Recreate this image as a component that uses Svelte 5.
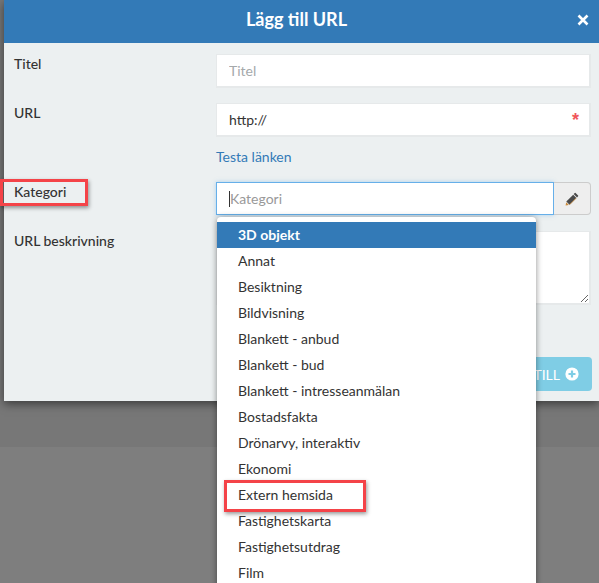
<script lang="ts">
	const categories = [
		'3D objekt',
		'Annat',
		'Besiktning',
		'Bildvisning',
		'Blankett - anbud',
		'Blankett - bud',
		'Blankett - intresseanmälan',
		'Bostadsfakta',
		'Drönarvy, interaktiv',
		'Ekonomi',
		'Extern hemsida',
		'Fastighetskarta',
		'Fastighetsutdrag',
		'Film'
	];
</script>

<div class="page">
	<div class="modal">
		<header class="head">
			<h1>Lägg till URL</h1>
			<svg class="close" viewBox="0 0 12 12" width="12" height="12" aria-hidden="true">
				<path d="M1.5 1.5l9 9M10.5 1.5l-9 9" stroke="#fff" stroke-width="2.6" fill="none" />
			</svg>
		</header>

		<div class="form">
			<div class="row">
				<span class="label">Titel</span>
				<div class="field"><input class="input" placeholder="Titel" /></div>
			</div>

			<div class="row row--url">
				<span class="label">URL</span>
				<div class="field required">
					<input class="input" value="http://" />
					<span class="star">*</span>
				</div>
			</div>

			<a class="test" href="#top">Testa länken</a>

			<div class="row">
				<span class="label mark-host">
					Kategori
					<span class="mark mark--label"></span>
				</span>
				<div class="field group">
					<div class="fake-input">
						<span class="caret"></span>
						<span class="ph">Kategori</span>
					</div>
					<button class="edit" aria-label="Redigera">
						<svg viewBox="0 0 14 14" width="14" height="14" aria-hidden="true">
							<path d="M10.6 1l2.5 2.5a.6.6 0 0 1 0 .8l-1.1 1.1-3.3-3.3 1.1-1.1a.6.6 0 0 1 .8 0z" fill="#4a4a4a" />
							<path d="M8.2 2.7l3.2 3.2-6.8 6.8-3.3-3.3z" fill="#4a4a4a" />
							<path d="M1.2 10.3l2.6 2.6-3.2.6z" fill="#c98a3c" />
							<path d="M4.6 12.7l6.6-6.6" stroke="#c98a3c" stroke-width="0.8" fill="none" />
						</svg>
					</button>
				</div>
			</div>

			<div class="row">
				<span class="label">URL beskrivning</span>
				<div class="field"><textarea class="area"></textarea></div>
			</div>

			<div class="actions">
				<button class="add">
					LÄGG TILL
					<svg viewBox="0 0 14 14" width="14" height="14" aria-hidden="true">
						<circle cx="7" cy="7" r="6.6" fill="#fff" />
						<path d="M7 3.5v7M3.5 7h7" stroke="#7fcde5" stroke-width="2.2" />
					</svg>
				</button>
			</div>
		</div>
	</div>

	<ul class="menu">
		{#each categories as name, i}
			<li class:active={i === 0}>
				{#if name === 'Extern hemsida'}
					<span class="mark mark--item"></span>
				{/if}
				{name}
			</li>
		{/each}
	</ul>
</div>

<style>
	:global(body) {
		margin: 0;
		background: #7e7e7e;
	}

	.page {
		position: relative;
		width: 599px;
		height: 583px;
		overflow: hidden;
		font: 14px Lato, 'Liberation Sans', sans-serif;
		color: #333;
		background: linear-gradient(#777 0, #777 447px, #7e7e7e 447px);
	}

	.modal {
		margin-left: 4px;
		height: 401px;
		background: #ecf0f1;
		box-shadow: 0 3px 9px rgba(0, 0, 0, 0.5);
	}

	.head {
		box-sizing: border-box;
		height: 43px;
		padding: 0 10px 5px 0;
		background: #337ab7;
		display: flex;
		align-items: center;
		justify-content: center;
		position: relative;
	}

	.head h1 {
		margin: 0;
		font: 700 18px Lato, sans-serif;
		color: #fff;
	}

	.close {
		position: absolute;
		right: 10px;
		top: 14px;
	}

	.form {
		padding: 11px 8px 0 10px;
		display: flex;
		flex-direction: column;
	}

	.row {
		display: grid;
		grid-template-columns: 202px 1fr;
		margin-bottom: 16px;
	}

	.row--url {
		margin-bottom: 12px;
	}

	.label {
		padding-top: 1px;
		font-weight: 500;
		line-height: 17px;
		color: #333;
	}

	.field {
		position: relative;
		display: flex;
	}

	.input,
	.area {
		box-sizing: border-box;
		width: 100%;
		border: 2px solid #e6e9ea;
		border-width: 1px 2px 2px 1px;
		background: #fff;
		padding: 0 12px;
		font: 14px Lato, sans-serif;
		color: #333;
		outline: none;
	}

	.input {
		height: 34px;
		margin-bottom: -1px;
	}

	.input::placeholder {
		color: #a5a9ab;
	}

	.area {
		height: 74px;
		resize: vertical;
	}

	.star {
		position: absolute;
		right: 12px;
		top: 7px;
		color: #f0565a;
		font: 700 18px 'Liberation Sans', sans-serif;
	}

	.test {
		margin: 0 0 17px 202px;
		color: #337ab7;
		text-decoration: none;
		line-height: 17px;
	}

	.group {
		height: 33px;
	}

	.fake-input {
		flex: 1;
		box-sizing: border-box;
		border: 1px solid #66afe9;
		box-shadow: 0 0 4px rgba(102, 175, 233, 0.5);
		background: #fff;
		display: flex;
		align-items: center;
		padding-left: 12px;
		color: #999;
	}

	.caret {
		width: 1px;
		height: 16px;
		background: #333;
	}

	.edit {
		width: 37px;
		box-sizing: border-box;
		border: 1px solid #ccc;
		border-left: 0;
		border-radius: 0 4px 4px 0;
		background: #eee;
		padding: 0;
		display: flex;
		align-items: center;
		justify-content: center;
	}

	.actions {
		display: flex;
		justify-content: flex-end;
		margin: 36px -1px 0 0;
	}

	.add {
		height: 34px;
		padding: 0 13px;
		border: 0;
		border-radius: 4px;
		background: #7fcde5;
		color: #fff;
		font: 14px Lato, sans-serif;
		display: flex;
		align-items: center;
		gap: 5px;
	}

	.menu {
		position: absolute;
		left: 217px;
		top: 217px;
		width: 319px;
		margin: 0;
		padding: 5px 0;
		list-style: none;
		background: #fff;
		border-radius: 4px 4px 0 0;
		box-shadow: 0 1px 6px rgba(0, 0, 0, 0.45);
	}

	.menu li {
		position: relative;
		height: 26px;
		line-height: 26px;
		padding-left: 21px;
		white-space: nowrap;
	}

	.menu li.active {
		background: #337ab7;
		color: #fff;
		font-weight: 700;
	}

	.mark-host {
		position: relative;
	}

	.mark {
		position: absolute;
		box-sizing: border-box;
		border: 3px solid #f44348;
		box-shadow: 1px 2px 4px rgba(0, 0, 0, 0.4);
	}

	.mark--label {
		left: -14px;
		top: -3px;
		width: 88px;
		height: 27px;
	}

	.mark--item {
		left: 7px;
		top: -2px;
		width: 142px;
		height: 32px;
	}
</style>
